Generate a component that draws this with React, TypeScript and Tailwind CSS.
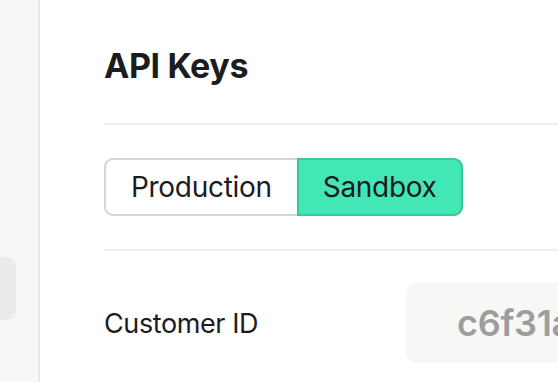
export default function App() {
    return (
        <div
            className="flex h-[382px] w-[558px] overflow-hidden bg-white text-[#1c1c1e]"
            style={{ fontFamily: "Inter, 'Noto Sans', sans-serif" }}
        >
            {/* Sidebar (mostly cut off) */}
            <aside className="w-[40px] flex-none overflow-hidden border-r-2 border-[#e8e8e8] bg-[#f7f7f7] pt-[257px]">
                <div className="ml-[-24px] h-[63px] w-[40px] rounded-[10px] bg-[#ebebeb]" />
            </aside>

            <main className="min-w-0 flex-1 overflow-hidden pl-[64px] pt-[45px]">
                <h1 className="text-[34px] font-bold leading-[41px] tracking-[-0.4px]">API Keys</h1>

                <div className="mt-[37px] h-[2px] w-full bg-[#efefef]" />

                {/* Environment toggle */}
                <div className="mt-[33px] flex w-fit">
                    <button className="flex h-[58px] items-center rounded-l-[9px] border-2 border-r-0 border-[#d6d6d6] bg-white px-[25px] text-[28px] leading-none tracking-[-0.3px]">
                        Production
                    </button>
                    <button className="flex h-[58px] items-center rounded-r-[9px] border-2 border-[#36c79b] bg-[#43e6b5] px-[24px] text-[28px] leading-none tracking-[-0.3px]">
                        Sandbox
                    </button>
                </div>

                <div className="mt-[33px] h-[2px] w-full bg-[#efefef]" />

                <div className="mt-[32px] flex items-center">
                    <div className="w-[302px] flex-none pt-[3px] text-[27px] tracking-[-0.4px]">Customer ID</div>
                    <div className="flex h-[80px] w-[420px] flex-none items-center overflow-hidden whitespace-nowrap rounded-[10px] bg-[#f7f7f6] pl-[51px] text-[36px] font-semibold tracking-[-0.3px] text-[#9d9d9d]">
                        c6f31a8e-4d27
                    </div>
                </div>
            </main>
        </div>
    );
}
